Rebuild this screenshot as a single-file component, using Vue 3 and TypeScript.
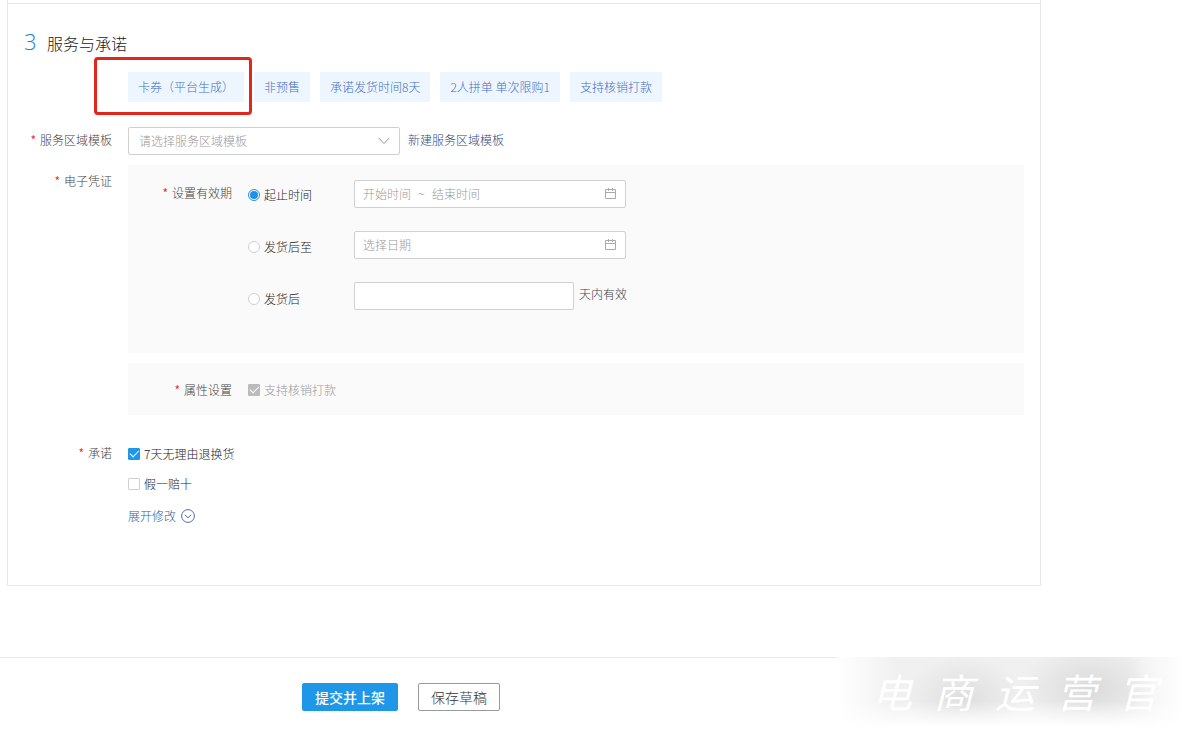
<script setup lang="ts">
import { ref } from 'vue'

const tags: string[] = ['卡券（平台生成）', '非预售', '承诺发货时间8天', '2人拼单 单次限购1', '支持核销打款']
const watermark: string[] = ['电', '商', '运', '营', '官']

interface Option {
  value: string
  label: string
}

const validityOptions: Option[] = [
  { value: 'range', label: '起止时间' },
  { value: 'until', label: '发货后至' },
  { value: 'days', label: '发货后' },
]

const template = ref('')
const validity = ref('range')
const startTime = ref('')
const endTime = ref('')
const untilDate = ref('')
const days = ref('')
const writeOff = ref(true)
const sevenDays = ref(true)
const tenfold = ref(false)
</script>

<template>
  <div class="page">
    <main class="card">
      <section class="section">
        <h2 class="title"><span class="step">3</span>服务与承诺</h2>

        <div class="tags">
          <span v-for="(tag, i) in tags" :key="tag" class="tag">
            {{ tag }}<i v-if="i === 0" class="highlight"></i>
          </span>
        </div>

        <div class="row template-row">
          <label class="label" for="template">服务区域模板</label>
          <div class="inline">
            <div class="select-box">
              <select id="template" v-model="template" class="select">
                <option value="" disabled>请选择服务区域模板</option>
              </select>
              <svg class="chevron" width="12" height="8" viewBox="0 0 12 8" fill="none" stroke="#999">
                <path d="M0.8 1 L6 6.6 L11.2 1" />
              </svg>
            </div>
            <a class="link" href="#">新建服务区域模板</a>
          </div>
        </div>

        <div class="row voucher-row">
          <span class="label voucher-label">电子凭证</span>
          <div class="panels">
            <div class="panel validity">
              <span id="validity-label" class="label">设置有效期</span>
              <div class="radios" role="radiogroup" aria-labelledby="validity-label">
                <label v-for="o in validityOptions" :key="o.value" class="choice">
                  <input v-model="validity" class="radio" type="radio" name="validity" :value="o.value" />
                  <span>{{ o.label }}</span>
                </label>
              </div>
              <div class="fields">
                <div class="field wide">
                  <input v-model="startTime" class="bare range-input" type="text" placeholder="开始时间" aria-label="开始时间" />
                  <span class="tilde">~</span>
                  <input v-model="endTime" class="bare" type="text" placeholder="结束时间" aria-label="结束时间" />
                  <svg class="calendar" width="12" height="12" viewBox="0 0 12 12" fill="none" stroke="#aaa">
                    <path d="M0.5 1.5 H10.5 V10.5 H0.5 Z M0.5 4.5 H10.5 M3.5 0 V3 M7.5 0 V3" />
                  </svg>
                </div>
                <div class="field wide">
                  <input v-model="untilDate" class="bare" type="text" placeholder="选择日期" aria-label="选择日期" />
                  <svg class="calendar" width="12" height="12" viewBox="0 0 12 12" fill="none" stroke="#aaa">
                    <path d="M0.5 1.5 H10.5 V10.5 H0.5 Z M0.5 4.5 H10.5 M3.5 0 V3 M7.5 0 V3" />
                  </svg>
                </div>
                <div class="days">
                  <input id="days" v-model="days" class="field days-input" type="text" />
                  <label for="days" class="suffix">天内有效</label>
                </div>
              </div>
            </div>
            <div class="panel attributes">
              <span class="label">属性设置</span>
              <label class="choice disabled">
                <input v-model="writeOff" class="check" type="checkbox" disabled />
                <span>支持核销打款</span>
              </label>
            </div>
          </div>
        </div>

        <div class="row pledge-row">
          <span class="label">承诺</span>
          <div class="pledges">
            <label class="choice">
              <input v-model="sevenDays" class="check" type="checkbox" />
              <span>7天无理由退换货</span>
            </label>
            <label class="choice">
              <input v-model="tenfold" class="check" type="checkbox" />
              <span>假一赔十</span>
            </label>
            <button class="expand" type="button">
              展开修改
              <svg width="14" height="14" viewBox="0 0 14 14" fill="none" stroke="#4b6fa5">
                <circle cx="7" cy="7" r="6.4" />
                <path d="M3.8 5.8 L7 8.8 L10.2 5.8" />
              </svg>
            </button>
          </div>
        </div>
      </section>
    </main>

    <footer class="footer">
      <button class="btn primary" type="button">提交并上架</button>
      <button class="btn" type="button">保存草稿</button>
      <div class="watermark">
        <span v-for="c in watermark" :key="c">{{ c }}</span>
      </div>
    </footer>
  </div>
</template>

<style>
body {
  margin: 0;
  background: #fff;
}
</style>

<style scoped>
.page,
.page * {
  box-sizing: border-box;
}
.page {
  font-family: 'Noto Sans CJK SC', sans-serif;
  font-size: 12px;
  font-weight: 300;
  line-height: 20px;
  color: #222;
}
.page input,
.page select,
.page button {
  font: inherit;
  margin: 0;
}
.card {
  margin: 0 143px 0 7px;
  padding-top: 3px;
  border: 1px solid #e8e8e8;
  border-top: 0;
}
.section {
  border-top: 1px solid #e8e8e8;
  padding: 24px 16px 58px 0;
}
.title {
  display: flex;
  align-items: center;
  height: 30px;
  margin: 0;
  padding-left: 16px;
  font-size: 16px;
  font-weight: 300;
}
.step {
  width: 23px;
  font-family: 'Open Sans', sans-serif;
  font-size: 22px;
  font-weight: 300;
  line-height: 26px;
  padding-bottom: 4px;
  color: #1a80d8;
}
.tags {
  display: flex;
  gap: 10px;
  margin: 14px 0 25px 120px;
}
.tag {
  position: relative;
  height: 30px;
  padding: 0 10px;
  line-height: 30px;
  white-space: nowrap;
  background: #edf6ff;
  color: #3f6fc2;
}
.highlight {
  position: absolute;
  z-index: 1;
  top: -15px;
  right: -8px;
  bottom: -13px;
  left: -34px;
  border: 3px solid #e1261c;
  border-radius: 4px;
}
.row {
  display: grid;
  grid-template-columns: 104px 1fr;
  column-gap: 16px;
  align-items: start;
}
.label {
  text-align: right;
  white-space: nowrap;
  color: #444;
}
.label::before {
  content: '*';
  margin-right: 4px;
  font-weight: 400;
  color: #e8303a;
}
.template-row .label {
  padding-top: 3px;
}
.inline {
  display: flex;
  gap: 8px;
}
.select-box {
  position: relative;
  width: 272px;
}
.select {
  display: block;
  width: 100%;
  height: 28px;
  padding: 0 30px 0 10px;
  border: 1px solid #d0d0d0;
  border-radius: 2px;
  background: #fff;
  color: #999;
  appearance: none;
}
.chevron {
  position: absolute;
  top: 10px;
  right: 10px;
  pointer-events: none;
}
.link {
  padding-top: 3px;
  color: #2c4a80;
  text-decoration: none;
}
.voucher-row {
  margin-top: 10px;
}
.voucher-label {
  padding-top: 6px;
}
.panels {
  display: grid;
  gap: 10px;
}
.panel {
  display: grid;
  grid-template-columns: 104px auto 1fr;
  align-items: start;
  column-gap: 16px;
  background: #fafafa;
}
.validity {
  grid-template-columns: 104px 90px 1fr;
  padding: 15px 16px 43px 0;
}
.validity .label {
  padding-top: 3px;
}
.radios {
  display: grid;
  gap: 32px;
  padding-top: 5px;
}
.fields {
  display: grid;
  gap: 23px;
}
.choice {
  display: flex;
  align-items: center;
  gap: 4px;
  height: 20px;
}
.radio,
.check {
  display: grid;
  place-items: center;
  flex: none;
  width: 12px;
  height: 12px;
  border: 1px solid #d0d0d0;
  background: #fff;
  appearance: none;
}
.radio {
  border-radius: 50%;
}
.radio:checked {
  border-color: #1e90e8;
}
.radio:checked::before {
  content: '';
  width: 8px;
  height: 8px;
  border-radius: 50%;
  background: #1e90e8;
}
.check {
  border-radius: 1px;
}
.check:checked {
  border-color: #1e97e8;
  background: #1e97e8;
}
.check:checked::before {
  content: '';
  width: 8px;
  height: 4px;
  margin-bottom: 3px;
  border: solid #fff;
  border-width: 0 0 1px 1px;
  transform: rotate(-45deg);
}
.check:disabled {
  border-color: #bbb;
  background: #bbb;
}
.disabled {
  color: #999;
}
.field {
  display: flex;
  align-items: center;
  height: 28px;
  padding: 0 8px;
  border: 1px solid #d0d0d0;
  border-radius: 2px;
  background: #fff;
}
.wide {
  width: 272px;
}
.days {
  display: flex;
  gap: 5px;
}
.days-input {
  width: 220px;
}
.suffix {
  padding-top: 2px;
  color: #444;
}
.bare {
  flex: 1;
  min-width: 0;
  height: 20px;
  padding: 0;
  border: 0;
  outline: 0;
  background: none;
}
.range-input {
  flex: none;
  width: 48px;
}
.bare::placeholder {
  color: #999;
  opacity: 1;
}
.tilde {
  width: 21px;
  padding-top: 2px;
  font-family: 'Noto Sans', sans-serif;
  text-align: center;
  color: #888;
}
.calendar {
  flex: none;
}
.attributes {
  padding: 17px 16px 15px 0;
}
.pledge-row {
  margin-top: 28px;
}
.pledges {
  display: grid;
  justify-items: start;
  gap: 10px;
  padding-top: 1px;
}
.expand {
  display: flex;
  align-items: center;
  gap: 5px;
  height: 23px;
  padding: 1px 0 0;
  border: 0;
  background: none;
  color: #34609c;
}
.footer {
  position: relative;
  display: flex;
  gap: 20px;
  margin-top: 71px;
  padding: 25px 0 18px 302px;
  border-top: 1px solid #ebebeb;
}
.page .btn {
  height: 28px;
  padding: 0 12px;
  border: 1px solid #999;
  border-radius: 2px;
  background: #fff;
  color: #333;
  font-size: 14px;
  line-height: 20px;
}
.page .primary {
  border-color: #1e97e8;
  background: #1e97e8;
  color: #fff;
  font-weight: 500;
}
.watermark {
  position: absolute;
  top: -1px;
  right: 0;
  display: flex;
  justify-content: space-between;
  width: 346px;
  height: 70px;
  padding: 0 26px 0 34px;
  background:
    linear-gradient(to right, #fff, transparent 60px, transparent 290px, #fff),
    linear-gradient(transparent 44px, #fff),
    radial-gradient(ellipse 60px 44px at 126px 60%, #dedede, transparent),
    radial-gradient(ellipse 70px 46px at 252px 45%, #dadada, transparent),
    #f0f0f0;
  color: #fff;
  font-size: 40px;
  font-style: italic;
  font-weight: 400;
  line-height: 68px;
}
</style>
